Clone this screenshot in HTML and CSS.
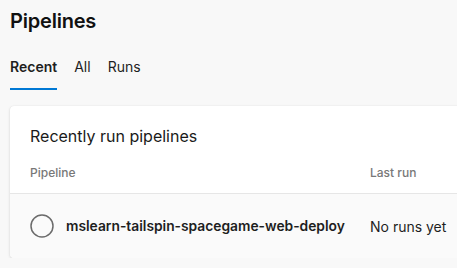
FILE: index.html
```html
<!DOCTYPE html>
<html>
<head>
<meta charset="utf-8">
<link rel="stylesheet" href="styles.css">
</head>
<body>
<div class="page">
  <h1 class="title">Pipelines</h1>
  <nav class="tabs">
    <span class="tab active">Recent</span>
    <span class="tab">All</span>
    <span class="tab">Runs</span>
  </nav>
  <section class="card">
    <h2 class="card-title">Recently run pipelines</h2>
    <div class="table-head">
      <span class="col-name">Pipeline</span>
      <span class="col-last">Last run</span>
    </div>
    <div class="row">
      <span class="col-name name-cell">
        <svg class="status" width="24" height="24" viewBox="0 0 24 24"><circle cx="12" cy="12" r="11" fill="none" stroke="#6b6b6b" stroke-width="1.5"/></svg>
        <span class="pipeline-name">mslearn-tailspin-spacegame-web-deploy</span>
      </span>
      <span class="col-last">No runs yet</span>
    </div>
  </section>
</div>
</body>
</html>
```
FILE: styles.css
```css
html, body {
  margin: 0;
  padding: 0;
  background: #f8f8f8;
  font-family: Inter, "Noto Sans", sans-serif;
  color: #1e1e1e;
  overflow: hidden;
}
.page {
  padding: 0 0 0 10px;
  width: 520px;
}
.title {
  margin: 0;
  padding-top: 8px;
  font-size: 20px;
  font-weight: 600;
  line-height: 26px;
  letter-spacing: -0.2px;
  color: #111;
}
.tabs {
  display: flex;
  gap: 17px;
  margin-top: 24px;
  height: 32px;
}
.tab {
  font-size: 14px;
  line-height: 17px;
  color: #1e1e1e;
}
.tab.active {
  font-weight: 600;
  box-shadow: inset 0 -2px 0 #0078d4;
}
.card {
  margin-top: 16px;
  background: #fff;
  border-radius: 4px;
  box-shadow: 0 1px 3px rgba(0,0,0,0.14), 0 0 1px rgba(0,0,0,0.1);
  overflow: hidden;
}
.card-title {
  margin: 0;
  padding: 20px 20px 0 20px;
  font-size: 16px;
  font-weight: 400;
  line-height: 20px;
  color: #1a1a1a;
}
.table-head {
  display: flex;
  padding: 19px 20px 0 20px;
  height: 28px;
  border-bottom: 1px solid #e6e6e6;
  font-size: 12px;
  font-weight: 500;
  line-height: 16px;
  color: #787878;
}
.col-name {
  width: 340px;
  flex: none;
}
.col-last {
  flex: none;
}
.row {
  display: flex;
  align-items: center;
  padding: 0 20px;
  height: 64px;
  background: #fafafa;
  font-size: 14px;
  color: #1e1e1e;
}
.name-cell {
  display: flex;
  align-items: center;
  gap: 12px;
}
.status {
  display: block;
}
.pipeline-name {
  font-weight: 600;
  font-size: 13.8px;
}
```
